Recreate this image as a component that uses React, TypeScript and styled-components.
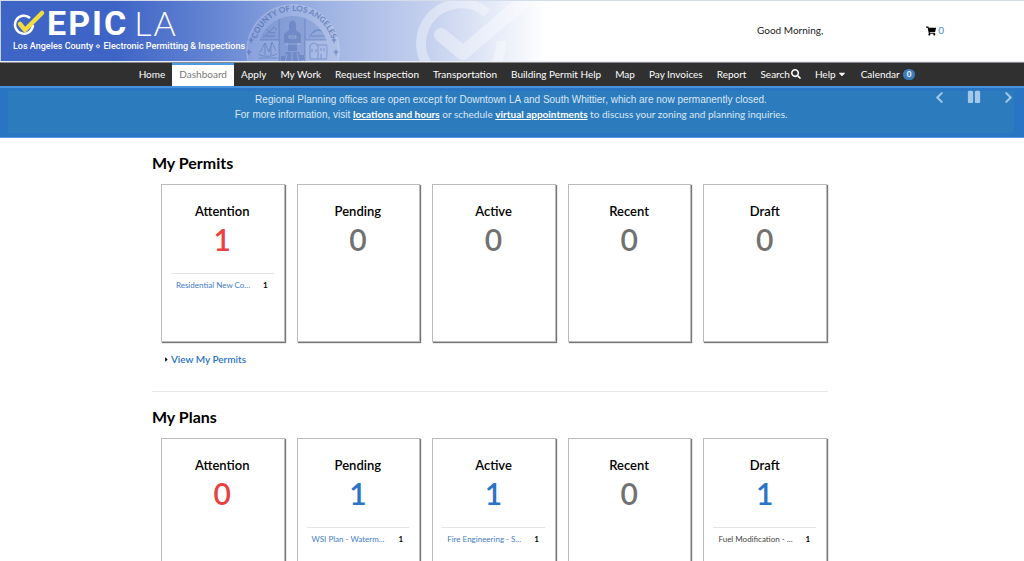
import React from "react";
import styled, { createGlobalStyle } from "styled-components";
import { FaShoppingCart, FaSearch, FaCaretDown, FaChevronLeft, FaChevronRight, FaPause, FaCaretRight } from "react-icons/fa";

const GlobalStyle = createGlobalStyle`
  * { box-sizing: border-box; }
  body { margin: 0; background: #fff; color: #000; font-family: Lato, "Liberation Sans", sans-serif; font-size: 10px; overflow-x: hidden; }
  h1, h2, h3, p, ul { margin: 0; padding: 0; }
  button { font: inherit; color: inherit; background: none; border: 0; padding: 0; cursor: pointer; }
  a { text-decoration: none; }
`;

const Header = styled.header`
  display: flex;
  align-items: flex-start;
  height: 62px;
  border-top: 1px solid #d5dcea;
  border-bottom: 1px solid #e9edf5;
`;

const Brand = styled.div`
  position: relative;
  flex: none;
  width: 548px;
  height: 60px;
  overflow: hidden;
  border-left: 1px solid #c5d0ec;
  background: linear-gradient(90deg, #3e64c6 0, #3e64c6 115px, #6686d3 215px, #9db2e3 320px, #c5d1ee 430px, #e9eef9 500px, #fff 545px);
`;

const Art = styled.svg`
  position: absolute;
  inset: 0;
  width: 548px;
  height: 60px;
`;

const BrandText = styled.div`
  position: relative;
  padding: 5px 0 0 12px;
  color: #fff;
  font-family: Roboto, sans-serif;
`;

const LogoLine = styled.div`
  display: flex;
  align-items: center;
  height: 34px;
`;

const LogoMark = styled.svg`
  flex: none;
  width: 34px;
  height: 30px;
`;

const Wordmark = styled.h1`
  display: flex;
  font-size: 34px;
  line-height: 34px;
  font-weight: 700;
  letter-spacing: 2px;
`;

const Thin = styled.span`
  padding-left: 6px;
  font-family: Lato, sans-serif;
  font-weight: 300;
`;

const Tagline = styled.p`
  font-size: 9px;
  line-height: 12px;
  font-weight: 500;
  white-space: nowrap;
`;

const Account = styled.div`
  flex: 1;
  display: flex;
  justify-content: space-between;
  padding: 23px 80px 0 209px;
  line-height: 13px;
  color: #222;
  white-space: nowrap;
`;

const Cart = styled.a`
  display: flex;
  align-items: center;
  gap: 2px;
  color: #4a8fd6;
  svg { color: #000; }
`;

const Nav = styled.nav`
  background: #303030;
  border-top: 1px solid #8a8a8a;
  padding-left: 30px;
`;

const NavList = styled.ul`
  display: flex;
  justify-content: center;
  list-style: none;
`;

const NavLink = styled.a<{ $active?: boolean }>`
  display: flex;
  align-items: center;
  gap: 1px;
  height: 23px;
  padding: 0 7px 3px;
  border-top: 2px solid ${(p) => (p.$active ? "#4d9ae8" : "transparent")};
  background: ${(p) => (p.$active ? "#fff" : "transparent")};
  color: ${(p) => (p.$active ? "#777" : "#fff")};
  white-space: nowrap;
`;

const Badge = styled.span`
  margin-left: 2px;
  padding: 0 4px;
  border-radius: 6px;
  background: #3f7cbd;
  font-size: 8px;
  line-height: 11px;
  font-weight: 700;
`;

const Banner = styled.section`
  position: relative;
  height: 52px;
  padding: 3px 10px 4px 8px;
  border-top: 2px solid #4a92dd;
  border-bottom: 1px solid #5a9be0;
  background: #2a74c4;
`;

const Slide = styled.div`
  height: 100%;
  padding-top: 1px;
  background: #2b7bbd;
  color: #dce8f4;
  text-align: center;
  line-height: 15px;
`;

const Sans = styled.span`
  font-family: "Liberation Sans", Arial, sans-serif;
  font-size: 10px;
`;

const BannerLink = styled.a`
  color: #fff;
  font-weight: 700;
  text-decoration: underline;
`;

const Controls = styled.div`
  position: absolute;
  top: 2px;
  right: 9px;
  display: flex;
  align-items: center;
  gap: 21px;
  color: #a4c8ea;
  button { display: flex; }
`;

const Main = styled.main`
  padding: 0 44px 0 0;
`;

const Section = styled.section`
  width: 69%;
  margin: 0 auto;
  padding-top: 14px;
  border-bottom: 1px solid #e8e8e8;
`;

const Title = styled.h2`
  font-size: 16px;
  line-height: 22px;
  font-weight: 700;
`;

const Cards = styled.div`
  display: grid;
  grid-template-columns: repeat(5, 1fr);
  gap: 12px;
  padding: 10px 1px 0 9px;
`;

const Card = styled.article`
  height: 158px;
  padding: 17px 10px 0 9px;
  border: 1px solid #bbb;
  box-shadow: 1px 1px 1px 0 #777;
  text-align: center;
`;

const CardTitle = styled.h3`
  font-size: 13px;
  line-height: 18px;
  font-weight: 600;
`;

const Count = styled.p<{ $tone: string }>`
  color: ${(p) => p.$tone};
  font-size: 30px;
  line-height: 38px;
  font-weight: 600;
`;

const Breakdown = styled.div`
  display: flex;
  justify-content: space-between;
  margin-top: 15px;
  padding: 5px 6px 0 5px;
  border-top: 1px solid #e4e4e4;
  font-size: 8px;
  line-height: 12px;
`;

const Kind = styled.a<{ $plain?: boolean }>`
  white-space: nowrap;
  color: ${(p) => (p.$plain ? "#444" : "#3f7cc8")};
`;

const More = styled.a`
  display: flex;
  align-items: center;
  gap: 1px;
  padding: 10px 0 25px 11px;
  color: #2a72c4;
  font-weight: 600;
  line-height: 14px;
  svg { color: #000; }
`;

const RED = "#e8413f";
const GREY = "#717171";
const BLUE = "#2b73c4";

type Item = { title: string; count: number; tone: string; kind?: string; plain?: boolean };

const permits: Item[] = [
  { title: "Attention", count: 1, tone: RED, kind: "Residential New Co..." },
  { title: "Pending", count: 0, tone: GREY },
  { title: "Active", count: 0, tone: GREY },
  { title: "Recent", count: 0, tone: GREY },
  { title: "Draft", count: 0, tone: GREY },
];

const plans: Item[] = [
  { title: "Attention", count: 0, tone: RED },
  { title: "Pending", count: 1, tone: BLUE, kind: "WSI Plan - Waterm..." },
  { title: "Active", count: 1, tone: BLUE, kind: "Fire Engineering - S..." },
  { title: "Recent", count: 0, tone: GREY },
  { title: "Draft", count: 1, tone: BLUE, kind: "Fuel Modification - ...", plain: true },
];

const links = ["Home", "Dashboard", "Apply", "My Work", "Request Inspection", "Transportation", "Building Permit Help", "Map", "Pay Invoices", "Report"];

function Overview({ title, items, more }: { title: string; items: Item[]; more?: string }) {
  return (
    <Section>
      <Title>{title}</Title>
      <Cards>
        {items.map((it) => (
          <Card key={it.title}>
            <CardTitle>{it.title}</CardTitle>
            <Count $tone={it.tone}>{it.count}</Count>
            {it.kind && (
              <Breakdown>
                <Kind href="#" $plain={it.plain}>{it.kind}</Kind>
                <strong>{it.count}</strong>
              </Breakdown>
            )}
          </Card>
        ))}
      </Cards>
      {more && <More href="#"><FaCaretRight size={7} />{more}</More>}
    </Section>
  );
}

function BrandArt() {
  return (
    <Art viewBox="0 0 548 60" aria-hidden="true">
      <defs>
        <path id="sealArc" d="M254 49a39 39 0 0 1 78 0" />
      </defs>
      <circle cx="292" cy="50" r="47" fill="#fff" opacity=".13" />
      <circle cx="292" cy="50" r="46" fill="none" stroke="#fff" strokeWidth="1" opacity=".15" />
      <text fill="#4766a8" opacity=".6" fontFamily="Lato" fontSize="8" fontWeight="700">
        <textPath href="#sealArc" startOffset="50%" textAnchor="middle">COUNTY OF LOS ANGELES</textPath>
      </text>
      <g fill="#4766a8" opacity=".5">
        <path d="M250 36l1 2 2 1-2 1-1 3-1-3-2-1 2-1zM248 48l1 2 2 1-2 1-1 3-1-3-2-1 2-1zM333 36l1 2 2 1-2 1-1 3-1-3-2-1 2-1zM335 48l1 2 2 1-2 1-1 3-1-3-2-1 2-1z" />
      </g>
      <clipPath id="sealInner"><circle cx="292" cy="50" r="35" /></clipPath>
      <g clipPath="url(#sealInner)">
        <path d="M256 14h22v25h-22zM304 14h25v25h-25z" fill="#5f7fc4" opacity=".3" />
        <path d="M278 14h26v50h-26z" fill="#5877bd" opacity=".3" />
        <g stroke="#4766a8" fill="none" opacity=".45" strokeWidth="1">
          <path d="M278 14v50M304 14v50M256 39h22M304 39h25" />
          <path d="M265 34l8-8 3 3M264 27l4 4 6 1M262 35h12" />
          <path d="M308 35h20M310 34a8 8 0 0 1 15 0M312 32a7 7 0 0 1 11 0" />
          <path d="M257 53c5 3 13 3 19 0M259 51l5-9 4 9M268 51l3-10 4 9M264 42v12M270 42v12M257 57h19" />
          <path d="M309 44l4-2 4 2v14h-8zM317 44h9v14h-9M311 48v3M315 48v3M320 47v3M323 47v3M320 53v5" />
        </g>
        <g fill="#4766a8" opacity=".35">
          <path d="M288 24c0-6 7-6 7 0v5l5 4v9h-4v8h-9v-8h-4v-9l5-4z" />
          <path d="M285 51h13l3 12h-19z" />
          <path d="M280 55h4v5h-4zM299 54h4v5h-4z" />
        </g>
        <path d="M288 35h7v2h-7zM284 43h16M286 53l-2 9M291 51v10M296 52l2 9" stroke="#b7c7ec" opacity=".5" fill="none" />
      </g>
      <g fill="none" stroke="#fff" opacity=".38">
        <path d="M486 12A40 40 0 1 0 500 40" strokeWidth="10" />
        <path d="M440 34l22 18 68-58" strokeWidth="14" strokeLinecap="round" strokeLinejoin="round" />
      </g>
    </Art>
  );
}

export default function App() {
  return (
    <>
      <GlobalStyle />
      <Header>
        <Brand>
          <BrandArt />
          <BrandText>
            <LogoLine>
              <LogoMark viewBox="0 0 34 30" aria-hidden="true">
                <path d="M17 10A9 9 0 1 0 20 17" fill="none" stroke="#fff" strokeWidth="2.5" />
                <path d="M7 16l5 6L29 5" fill="none" stroke="#f2dc3e" strokeWidth="4.5" strokeLinecap="round" strokeLinejoin="round" />
              </LogoMark>
              <Wordmark>EPIC<Thin>LA</Thin></Wordmark>
            </LogoLine>
            <Tagline>Los Angeles County ⋄ Electronic Permitting &amp; Inspections</Tagline>
          </BrandText>
        </Brand>
        <Account>
          <span>Good Morning,</span>
          <Cart href="#" aria-label="Cart, 0 items"><FaShoppingCart size={10} />0</Cart>
        </Account>
      </Header>
      <Nav>
        <NavList>
          {links.map((l) => (
            <li key={l}><NavLink href="#" $active={l === "Dashboard"}>{l}</NavLink></li>
          ))}
          <li><NavLink href="#">Search<FaSearch size={10} /></NavLink></li>
          <li><NavLink href="#">Help<FaCaretDown size={10} /></NavLink></li>
          <li><NavLink href="#">Calendar<Badge>0</Badge></NavLink></li>
        </NavList>
      </Nav>
      <Banner>
        <Slide>
          <p><Sans>Regional Planning offices are open except for Downtown LA and South Whittier, which are now permanently closed.</Sans></p>
          <p>
            <Sans>For more information, visit </Sans>
            <BannerLink href="#">locations and hours</BannerLink> or schedule <BannerLink href="#">virtual appointments</BannerLink> to discuss your zoning and planning inquiries.
          </p>
        </Slide>
        <Controls>
          <button aria-label="Previous"><FaChevronLeft size={13} /></button>
          <button aria-label="Pause"><FaPause size={14} /></button>
          <button aria-label="Next"><FaChevronRight size={13} /></button>
        </Controls>
      </Banner>
      <Main>
        <Overview title="My Permits" items={permits} more="View My Permits" />
        <Overview title="My Plans" items={plans} />
      </Main>
    </>
  );
}
